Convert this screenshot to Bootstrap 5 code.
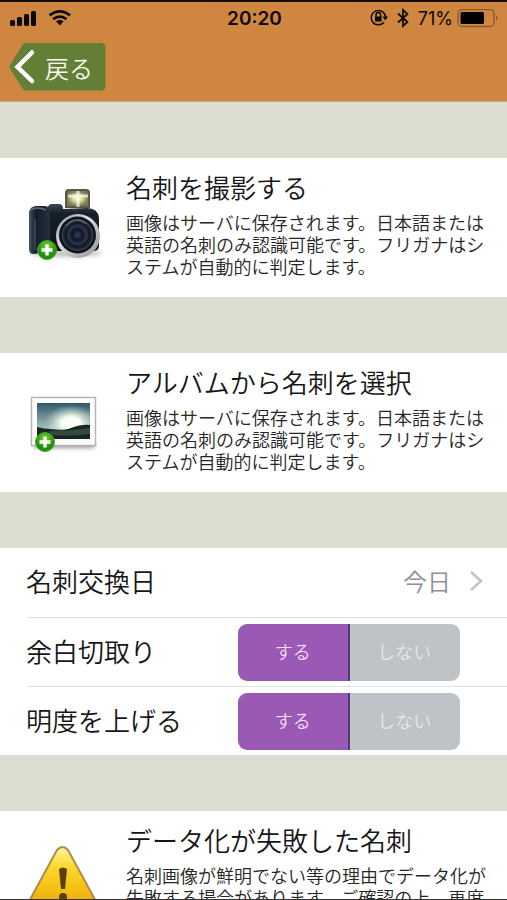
<!DOCTYPE html>
<html lang="ja">
<head>
<meta charset="utf-8">
<meta name="viewport" content="width=device-width, initial-scale=1">
<title>名刺を追加</title>
<link href="https://cdn.jsdelivr.net/npm/bootstrap@5.3.0/dist/css/bootstrap.min.css" rel="stylesheet">
<style>
body { font-family: "Noto Sans CJK JP", sans-serif; font-weight: 350; background: #dbddd0; color: #161616; }
.screen { border-top: 2px solid #140d08; border-bottom: 1px solid #333; }
.topbar { background: #cf8640; border-bottom: 1px solid #c5a781; color: #0d0805; }
.status { height: 33px; padding: 0 8px 0 10px; font-family: Inter, sans-serif; font-size: 18px; line-height: 32px; }
.clock { font-size: 19px; font-weight: 600; }
.back { margin: 8px 0 10px 9px; width: 97px; height: 48px; color: #f7fbef; font-size: 24px; line-height: 48px; }
.back-text { padding-left: 36px; padding-top: 1px; }
.sections { gap: 56px; padding-top: 56px; }
.entry { min-height: 139px; color: #161616; }
.entry-text { padding: 13px 18px 18px 0; }
.entry-title { font-size: 26px; line-height: 32px; font-weight: 350; margin-bottom: 8px; }
.entry-note { font-size: 18px; line-height: 22px; color: #262626; }
.settings { padding-left: 26px; }
.setting { height: 69px; font-size: 26px; color: #161616; }
.setting-name { padding-bottom: 4px; }
.setting + .setting { border-top: 1px solid #e2e3e4; }
.value { font-size: 24px; color: #8e8e93; padding-bottom: 4px; }
.choice { width: 222px; height: 57px; margin-right: 47px; }
.choice .btn { border: 0; background: #bdc3c7; color: #e4e8ea; font-size: 18px; font-weight: 350; line-height: 54px; border-radius: 9px; }
.choice .btn-check:checked + .btn { background: #9b59b6; color: #f0dff7; border-right: 2px solid #4c3f73; }
</style>
<script src="https://cdn.jsdelivr.net/npm/bootstrap@5.3.0/dist/js/bootstrap.bundle.min.js"></script>
</head>
<body>
<div class="screen vh-100 overflow-hidden">
  <header class="topbar">
    <div class="status row g-0 align-items-center">
      <div class="col d-flex align-items-center">
        <svg width="64" height="20" viewBox="0 1 64 20" aria-hidden="true">
          <g fill="#0d0805"><rect x="0" y="12" width="5" height="6" rx="1.5"/><rect x="7" y="9" width="5" height="9" rx="1.5"/><rect x="14" y="6" width="5" height="12" rx="1.5"/><rect x="21" y="3" width="5" height="15" rx="1.5"/>
          <path d="M46 13.200q3.800-2.600 7.600 0L49.800 17.600z"/></g>
          <g fill="none" stroke="#0d0805" stroke-width="2.700"><path d="M39.600 7.400q10.200-8.200 20.400 0"/><path d="M43.100 11.200q6.700-5 13.400 0"/></g>
        </svg>
      </div>
      <div class="col-auto clock">20:20</div>
      <div class="col d-flex align-items-center justify-content-end">
        <svg width="46" height="22" viewBox="0 1 46 22" aria-hidden="true">
          <g fill="none" stroke="#0d0805" stroke-width="1.500"><path d="M16 15.200A7.200 7.200 0 1 1 17.600 10"/><path d="M8 10V7.800a2.300 2.300 0 0 1 4.600 0V10"/><path d="M30 6.500l9.500 8.500-4.500 4V3l4.500 4-9.500 8.500" stroke-width="1.700"/></g>
          <rect x="7" y="9.500" width="6.600" height="5" rx=".8" fill="#0d0805"/><path d="M14.500 9.500h5.500l-2.700 4z" fill="#0d0805"/>
        </svg>
        <span class="fw-normal ms-1 me-1">71%</span>
        <svg width="42" height="20" viewBox="0 1 42 20" aria-hidden="true">
          <rect x="1" y="1.500" width="36" height="17" rx="4" fill="none" stroke="#8c5c2d" stroke-width="1.500"/><rect x="3.500" y="4" width="23.500" height="12" rx="1.500" fill="#000"/><path d="M39 7.200q3 2.800 0 5.600z" fill="#8c5c2d"/>
        </svg>
      </div>
    </div>
    <a class="back d-block position-relative text-decoration-none" href="#">
      <svg class="position-absolute top-0 start-0" width="97" height="48" viewBox="0 0 97 48" aria-hidden="true">
        <path d="M16.500 0H92q4.500 0 4.500 4.500v38.500q0 4.500-4.500 4.500H16.500q-2 0-3-2L1 26q-1-2 0-4L13.500 2q1-2 3-2z" fill="#637f36"/>
        <path d="M23 9.500L8.500 24l14.500 14" fill="none" stroke="#fff" stroke-width="4.500" stroke-linecap="round" stroke-linejoin="miter"/>
      </svg>
      <span class="back-text position-relative d-block">戻る</span>
    </a>
  </header>
  <main class="sections d-flex flex-column">
    <a class="entry bg-white d-flex text-decoration-none" href="#">
      <svg class="flex-shrink-0" width="126" height="139" viewBox="0 158 126 139" aria-hidden="true">
        <defs>
          <linearGradient id="body" x2="0" y2="1"><stop stop-color="#3b4750"/><stop offset=".2" stop-color="#17202a"/><stop offset="1" stop-color="#0c1118"/></linearGradient>
          <linearGradient id="grip"><stop stop-color="#4a5666"/><stop offset=".3" stop-color="#151d2a"/><stop offset="1" stop-color="#252f40"/></linearGradient>
          <linearGradient id="ring" x2="1" y2="1"><stop stop-color="#8e9499"/><stop offset=".4" stop-color="#dadddd"/><stop offset="1" stop-color="#8d9296"/></linearGradient>
          <radialGradient id="lens"><stop stop-color="#34405e"/><stop offset=".35" stop-color="#101625"/><stop offset=".6" stop-color="#2b3850"/><stop offset=".75" stop-color="#111722"/><stop offset="1" stop-color="#2e343c"/></radialGradient>
          <radialGradient id="flash"><stop stop-color="#fffff0"/><stop offset=".4" stop-color="#e0e09a"/><stop offset="1" stop-color="#777b58"/></radialGradient>
          <radialGradient id="green" cy=".3"><stop stop-color="#72d532"/><stop offset="1" stop-color="#258f0d"/></radialGradient>
          <filter id="shade" x="-50%" y="-100%" width="200%" height="300%"><feGaussianBlur stdDeviation="2"/></filter>
        </defs>
        <ellipse cx="66" cy="253" rx="36" ry="4" fill="#c5c5c5" filter="url(#shade)"/>
        <path d="M65 208V193q0-4 4-4h17q4 0 4 4v15z" fill="#565a42"/>
        <path d="M67 206V194q0-3 3-3h15q3 0 3 3v12z" fill="url(#flash)"/>
        <path d="M68 196h20M78 191v16" stroke="#fffff1" stroke-width="3" opacity=".7"/>
        <path d="M48 208q0-4 4-4h7q4 0 4 5l24-1q11 0 12 10v28q0 5-6 5H50z" fill="url(#body)"/>
        <path d="M29 212q1-6 8-6h8q5 0 5 6v40l-17 2q-4 0-4-5z" fill="url(#grip)"/>
        <path d="M31 210q6-4 15 0" fill="none" stroke="#657081" stroke-width="1.500"/>
        <path d="M35 219v31" stroke="#364155" stroke-width="2"/>
        <circle cx="78" cy="236" r="22" fill="url(#ring)"/><circle cx="77.500" cy="235" r="18.500" fill="#0d131b"/><circle cx="77.500" cy="235" r="15.500" fill="url(#lens)" stroke="#39434e"/>
        <path d="M66 226q10-11 21-2" fill="none" stroke="#59677c" stroke-width="1.500"/>
        <circle cx="47" cy="250" r="9.500" fill="url(#green)" stroke="#4aa52b"/>
        <path d="M47 244.500v11M41.500 250h11" stroke="#fff" stroke-width="3.300"/>
      </svg>
      <div class="entry-text">
        <h2 class="entry-title">名刺を撮影する</h2>
        <p class="entry-note mb-0">画像はサーバに保存されます。日本語または英語の名刺のみ認識可能です。フリガナはシステムが自動的に判定します。</p>
      </div>
    </a>
    <a class="entry bg-white d-flex text-decoration-none" href="#">
      <svg class="flex-shrink-0" width="126" height="139" viewBox="0 353 126 139" aria-hidden="true">
        <defs>
          <linearGradient id="sky" x2="0" y2="1"><stop stop-color="#32596a"/><stop offset=".7" stop-color="#a0bdb9"/><stop offset="1" stop-color="#7e9b98"/></linearGradient>
          <radialGradient id="sun" cx=".64" cy=".56" r=".5"><stop stop-color="#fff"/><stop offset=".35" stop-color="#f5fff1"/><stop offset="1" stop-color="#c8ddd1" stop-opacity="0"/></radialGradient>
        </defs>
        <rect x="34" y="442" width="60" height="6" fill="#999" filter="url(#shade)"/>
        <rect x="31.500" y="397.500" width="64" height="48" fill="#fff" stroke="#b4b4b4" stroke-width="1.500"/>
        <rect x="37" y="403" width="53" height="36" fill="url(#sky)"/><rect x="37" y="403" width="53" height="36" fill="url(#sun)"/>
        <path d="M37 427q7 2 13 2 15 2 21-1 11-4 19-3v14H37z" fill="#18251f"/>
        <path d="M50 431q20 0 40-3v6q-20 3-40 1z" fill="#34483b"/>
        <circle cx="45" cy="442" r="9.500" fill="url(#green)" stroke="#4aa52b"/>
        <path d="M45 436.500v11M39.500 442h11" stroke="#fff" stroke-width="3.300"/>
      </svg>
      <div class="entry-text">
        <h2 class="entry-title">アルバムから名刺を選択</h2>
        <p class="entry-note mb-0">画像はサーバに保存されます。日本語または英語の名刺のみ認識可能です。フリガナはシステムが自動的に判定します。</p>
      </div>
    </a>
    <section class="settings bg-white">
      <a class="setting d-flex align-items-center justify-content-between text-decoration-none" href="#">
        <span class="setting-name">名刺交換日</span>
        <span class="value d-flex align-items-center">今日
          <svg class="ms-3 me-4" width="16" height="24" viewBox="0 0 16 24" aria-hidden="true"><path d="M4 3l10 9-10 9" fill="none" stroke="#c3c3c7" stroke-width="2.500"/></svg>
        </span>
      </a>
      <div class="setting d-flex align-items-center justify-content-between">
        <span class="setting-name" id="trim">余白切取り</span>
        <div class="choice btn-group" role="group" aria-labelledby="trim">
          <input class="btn-check" type="radio" name="trim" id="trim-yes" checked><label class="btn p-0 w-50" for="trim-yes">する</label>
          <input class="btn-check" type="radio" name="trim" id="trim-no"><label class="btn p-0 w-50" for="trim-no">しない</label>
        </div>
      </div>
      <div class="setting d-flex align-items-center justify-content-between">
        <span class="setting-name" id="bright">明度を上げる</span>
        <div class="choice btn-group" role="group" aria-labelledby="bright">
          <input class="btn-check" type="radio" name="bright" id="bright-yes" checked><label class="btn p-0 w-50" for="bright-yes">する</label>
          <input class="btn-check" type="radio" name="bright" id="bright-no"><label class="btn p-0 w-50" for="bright-no">しない</label>
        </div>
      </div>
    </section>
    <a class="entry bg-white d-flex text-decoration-none" href="#">
      <svg class="flex-shrink-0" width="126" height="139" viewBox="0 811 126 139" aria-hidden="true">
        <defs><linearGradient id="warn" x2="0" y2="1"><stop stop-color="#fff3a0"/><stop offset=".3" stop-color="#fbd92e"/><stop offset=".7" stop-color="#f4b90e"/><stop offset="1" stop-color="#e89b0c"/></linearGradient></defs>
        <path d="M57 850q5.500-6 11 0L98 905q3 8-5 8H32q-8 0-5-8z" fill="url(#warn)" stroke="#b08a4c" stroke-width="2"/>
        <path d="M59 869q4-3 8 0l-2 20h-4z" fill="#59420a"/><circle cx="63" cy="897" r="4" fill="#59420a"/>
      </svg>
      <div class="entry-text">
        <h2 class="entry-title">データ化が失敗した名刺</h2>
        <p class="entry-note mb-0">名刺画像が鮮明でない等の理由でデータ化が失敗する場合があります。ご確認の上、再度</p>
      </div>
    </a>
  </main>
</div>
</body>
</html>
